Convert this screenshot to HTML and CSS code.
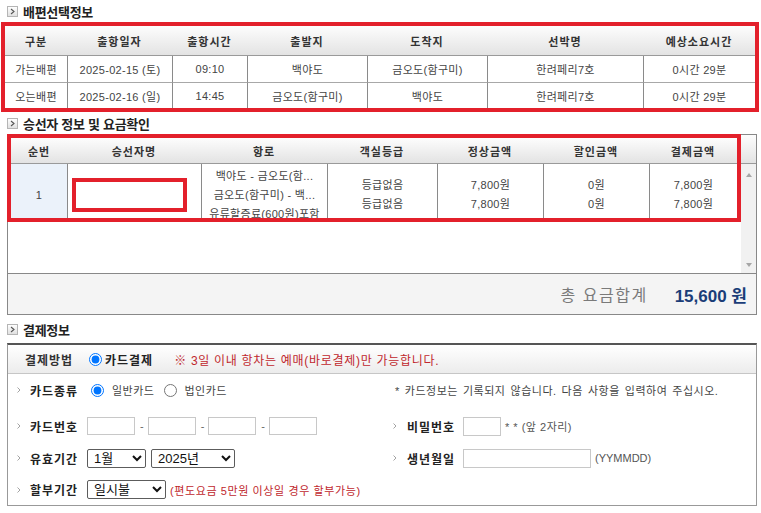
FILE: index.html
```html
<!DOCTYPE html>
<html lang="ko">
<head>
<meta charset="utf-8">
<title>배편 결제</title>
<link rel="stylesheet" href="styles.css">
</head>
<body>
<div class="page">
  <h2 class="sec-title"><span class="sec-ico"><svg width="5" height="7" viewBox="0 0 5 7"><polyline points="1,1 4,3.5 1,6" fill="none" stroke="#555" stroke-width="1.1"/></svg></span>배편선택정보</h2>
  <div class="red-box voyage">
    <table class="tbl voy-tbl">
      <colgroup>
        <col class="v1"><col class="v2"><col class="v3"><col class="v4"><col class="v5"><col class="v6"><col class="v7">
      </colgroup>
      <thead>
        <tr><th>구분</th><th>출항일자</th><th>출항시간</th><th>출발지</th><th>도착지</th><th>선박명</th><th>예상소요시간</th></tr>
      </thead>
      <tbody>
        <tr><td>가는배편</td><td>2025-02-15 (토)</td><td>09:10</td><td>백야도</td><td>금오도(함구미)</td><td>한려페리7호</td><td>0시간 29분</td></tr>
        <tr><td>오는배편</td><td>2025-02-16 (일)</td><td>14:45</td><td>금오도(함구미)</td><td>백야도</td><td>한려페리7호</td><td>0시간 29분</td></tr>
      </tbody>
    </table>
  </div>

  <h2 class="sec-title"><span class="sec-ico"><svg width="5" height="7" viewBox="0 0 5 7"><polyline points="1,1 4,3.5 1,6" fill="none" stroke="#555" stroke-width="1.1"/></svg></span>승선자 정보 및 요금확인</h2>
  <div class="pax-box">
    <div class="pax-scroll">
      <div class="pax-main">
        <div class="red-box pax-red">
          <table class="tbl pax-tbl">
            <colgroup>
              <col class="p1"><col class="p2"><col class="p3"><col class="p4"><col class="p5"><col class="p6"><col class="p7">
            </colgroup>
            <thead>
              <tr><th>순번</th><th>승선자명</th><th>항로</th><th>객실등급</th><th>정상금액</th><th>할인금액</th><th>결제금액</th></tr>
            </thead>
            <tbody>
              <tr>
                <td class="no">1</td>
                <td class="name"><div class="name-box"></div></td>
                <td class="route"><div>백야도 - 금오도(함...</div><div>금오도(함구미) - 백...</div><div>유류할증료(600원)포함</div></td>
                <td>등급없음<br>등급없음</td>
                <td>7,800원<br>7,800원</td>
                <td>0원<br>0원</td>
                <td>7,800원<br>7,800원</td>
              </tr>
            </tbody>
          </table>
        </div>
      </div>
      <div class="pax-side">
        <div class="side-head"></div>
        <div class="scrollbar"><span class="arr up"></span><span class="arr down"></span></div>
      </div>
    </div>
    <div class="total"><span class="total-label">총 요금합계</span><span class="total-value">15,600 원</span></div>
  </div>

  <h2 class="sec-title pay-title"><span class="sec-ico"><svg width="5" height="7" viewBox="0 0 5 7"><polyline points="1,1 4,3.5 1,6" fill="none" stroke="#555" stroke-width="1.1"/></svg></span>결제정보</h2>
  <div class="pay-box">
    <div class="pay-head">
      <span class="head-label">결제방법</span>
      <input type="radio" class="rad head-rad" name="method" checked>
      <span class="head-opt">카드결제</span>
      <span class="note-red head-note">※ 3일 이내 항차는 예매(바로결제)만 가능합니다.</span>
    </div>
    <div class="pay-line">
      <div class="pay-cell left">
        <span class="arrow"><svg width="4" height="6" viewBox="0 0 4 6"><polyline points="0.5,0.5 3,3 0.5,5.5" fill="none" stroke="#999" stroke-width="0.9"/></svg></span>
        <span class="lbl">카드종류</span>
        <input type="radio" class="rad r1" name="ctype" checked><span class="opt o1">일반카드</span>
        <input type="radio" class="rad r2" name="ctype"><span class="opt o2">법인카드</span>
      </div>
      <div class="pay-cell right">
        <span class="info">* 카드정보는 기록되지 않습니다. 다음 사항을 입력하여 주십시오.</span>
      </div>
    </div>
    <div class="pay-line tall">
      <div class="pay-cell left">
        <span class="arrow"><svg width="4" height="6" viewBox="0 0 4 6"><polyline points="0.5,0.5 3,3 0.5,5.5" fill="none" stroke="#999" stroke-width="0.9"/></svg></span>
        <span class="lbl">카드번호</span>
        <input type="text" class="txt card">
        <span class="dash">-</span>
        <input type="text" class="txt card">
        <span class="dash">-</span>
        <input type="text" class="txt card">
        <span class="dash">-</span>
        <input type="text" class="txt card">
      </div>
      <div class="pay-cell right">
        <span class="arrow r"><svg width="4" height="6" viewBox="0 0 4 6"><polyline points="0.5,0.5 3,3 0.5,5.5" fill="none" stroke="#999" stroke-width="0.9"/></svg></span>
        <span class="lbl r">비밀번호</span>
        <input type="password" class="txt pw">
        <span class="hint">* * (앞 2자리)</span>
      </div>
    </div>
    <div class="pay-line">
      <div class="pay-cell left">
        <span class="arrow"><svg width="4" height="6" viewBox="0 0 4 6"><polyline points="0.5,0.5 3,3 0.5,5.5" fill="none" stroke="#999" stroke-width="0.9"/></svg></span>
        <span class="lbl">유효기간</span>
        <select class="sel month"><option>1월</option></select>
        <select class="sel year"><option>2025년</option></select>
      </div>
      <div class="pay-cell right">
        <span class="arrow r"><svg width="4" height="6" viewBox="0 0 4 6"><polyline points="0.5,0.5 3,3 0.5,5.5" fill="none" stroke="#999" stroke-width="0.9"/></svg></span>
        <span class="lbl r">생년월일</span>
        <input type="text" class="txt birth">
        <span class="hint ymd">(YYMMDD)</span>
      </div>
    </div>
    <div class="pay-line last">
      <div class="pay-cell left wide">
        <span class="arrow"><svg width="4" height="6" viewBox="0 0 4 6"><polyline points="0.5,0.5 3,3 0.5,5.5" fill="none" stroke="#999" stroke-width="0.9"/></svg></span>
        <span class="lbl">할부기간</span>
        <select class="sel inst"><option>일시불</option></select>
        <span class="note-red inst-note">(편도요금 5만원 이상일 경우 할부가능)</span>
      </div>
      <div class="pay-cell right"></div>
    </div>
  </div>
</div>
</body>
</html>
```

FILE: styles.css
```css
* { box-sizing: border-box; }
html, body { margin: 0; padding: 0; background: #fff; }
body {
  font-family: "Liberation Sans", "Noto Sans CJK KR", sans-serif;
  font-size: 11px;
  color: #444;
}
.page { width: 761px; }

/* section titles */
.sec-title {
  display: flex;
  align-items: center;
  gap: 5px;
  height: 22px;
  margin: 0;
  padding-left: 7px;
  font-family: "Noto Sans CJK KR", sans-serif;
  font-size: 13px;
  font-weight: 700;
  color: #222;
  letter-spacing: -0.3px;
}
.pay-title { height: 28px; }
.sec-ico {
  width: 11px;
  height: 11px;
  border: 1px solid #b5b5b5;
  background: linear-gradient(#ffffff, #e0e0e0);
  display: flex;
  align-items: center;
  justify-content: center;
}
.sec-ico svg { display: block; }

.red-box { border: 4px solid #e3202b; }

/* tables */
.tbl { border-collapse: separate; border-spacing: 0; table-layout: fixed; }
.tbl th, .tbl td {
  padding: 0;
  text-align: center;
  vertical-align: middle;
  white-space: nowrap;
  overflow: hidden;
}
.tbl th {
  background: linear-gradient(#fdfdfd, #e3e3e3);
  border-bottom: 1px solid #9a9a9a;
  font-family: "Noto Sans CJK KR", sans-serif;
  font-weight: 700;
  font-size: 11px;
  letter-spacing: 1px;
  color: #333;
}
.tbl td { color: #444; letter-spacing: 0.3px; }

.voyage { width: 758px; margin-left: 1px; }
.voy-tbl { width: 750px; }
.voy-tbl th { height: 30px; }
.voy-tbl td { height: 26px; border-left: 1px solid #8a8a8a; }
.voy-tbl td:first-child { border-left: 0; }
.voy-tbl tbody tr + tr td { border-top: 1px solid #a8a8a8; }
.v1 { width: 62px; } .v2 { width: 105px; } .v3 { width: 75px; } .v4 { width: 120px; }
.v5 { width: 120px; } .v6 { width: 156px; } .v7 { width: 112px; }

/* passenger box */
.pax-box { margin-left: 7px; width: 750px; border: 1px solid #888; }
.pax-scroll { display: flex; height: 138px; }
.pax-main { flex: 0 0 733px; }
.pax-red { margin: -1px 0 0 -1px; width: 734px; height: 88px; overflow: hidden; }
.pax-tbl { width: 726px; }
.pax-tbl th { height: 26px; }
.pax-tbl td { height: 62px; line-height: 19px; border-left: 1px solid #8a8a8a; }
.pax-tbl td.no { background: #ebf2fa; border-left: 0; }
.pax-tbl td.name { text-align: left; }
.name-box { width: 115px; height: 34px; margin-left: 4px; border: 4px solid #e3202b; background: #fff; }
.p1 { width: 56px; } .p2 { width: 134px; } .p3 { width: 126px; } .p4 { width: 110px; }
.p5 { width: 106px; } .p6 { width: 106px; } .p7 { width: 88px; }

.pax-side { flex: 1; display: flex; flex-direction: column; }
.side-head { height: 29px; background: linear-gradient(#fdfdfd, #e3e3e3); border-bottom: 1px solid #9a9a9a; }
.scrollbar {
  flex: 1;
  background: #f1f1f1;
  display: flex;
  flex-direction: column;
  align-items: center;
  justify-content: space-between;
  padding: 9px 0 6px;
}
.arr { width: 0; height: 0; border-left: 3.5px solid transparent; border-right: 3.5px solid transparent; }
.arr.up { border-bottom: 4px solid #a6a6a6; }
.arr.down { border-top: 4px solid #a6a6a6; }

.total {
  height: 41px;
  border-top: 1px solid #888;
  background: #f4f4f4;
  display: flex;
  align-items: center;
  justify-content: flex-end;
  gap: 27px;
  padding-right: 9px;
}
.total-label { font-family: "Noto Sans CJK KR", sans-serif; font-size: 16px; color: #7a7a7a; letter-spacing: 1.5px; }
.total-value { font-size: 17px; font-weight: 700; color: #1b3d78; }

/* payment box */
.pay-box { margin-left: 7px; width: 750px; border: 1px solid #999; border-top: 2px solid #555; }
.pay-head {
  height: 29px;
  display: flex;
  align-items: center;
  padding-left: 17px;
  background: linear-gradient(#ffffff, #ececec);
  border-bottom: 1px solid #c6c6c6;
}
.head-label { font-family: "Noto Sans CJK KR", sans-serif; font-size: 12px; font-weight: 700; color: #333; width: 64px; letter-spacing: 1px; }
.rad { margin: 0; width: 13px; height: 13px; flex: none; }
.head-opt { margin-left: 3px; font-family: "Noto Sans CJK KR", sans-serif; font-size: 12px; font-weight: 700; color: #222; letter-spacing: 1px; }
.note-red { color: #c0272d; }
.head-note { margin-left: 21px; font-size: 12px; letter-spacing: 0.7px; }

.pay-line { display: grid; grid-template-columns: 385px 1fr; height: 32px; }
.pay-line.tall { height: 36px; padding-top: 4px; }
.pay-line.last { height: 31px; }
.pay-cell { display: flex; align-items: center; white-space: nowrap; }
.pay-cell.left { padding-left: 9px; }
.arrow { width: 13px; display: flex; align-items: center; }
.arrow.r { width: 14px; }
.arrow svg { display: block; }
.lbl { width: 57px; font-family: "Noto Sans CJK KR", sans-serif; font-size: 12px; font-weight: 700; color: #222; letter-spacing: 1px; }
.lbl.r { width: 56px; }
.r1 { margin-left: 4px; }
.o1 { margin-left: 8px; }
.r2 { margin-left: 10px; }
.o2 { margin-left: 7px; }
.opt { color: #444; letter-spacing: 0.5px; }
.info { padding-left: 2px; color: #444; word-spacing: 1.5px; letter-spacing: 0.5px; }

.txt { height: 18px; border: 1px solid #c8c8c8; padding: 0 2px; background: #fff; font-size: 11px; }
.card { width: 48px; }
.dash { margin: 0 4px 0 5px; color: #666; }
.pw { width: 38px; height: 19px; }
.birth { width: 128px; height: 19px; }
.hint { margin-left: 4px; color: #555; letter-spacing: 0.5px; }
.hint.ymd { letter-spacing: 0; }

.sel {
  height: 19px;
  border: 1px solid #5c5c5c;
  border-radius: 2px;
  background: #fff;
  font-family: "Liberation Sans", "Noto Sans CJK KR", sans-serif;
  font-size: 13px;
  color: #111;
  padding: 0 0 0 2px;
}
.month { width: 59px; }
.year { width: 84px; margin-left: 5px; }
.inst { width: 79px; }
.inst-note { margin-left: 4px; letter-spacing: 0.6px; }
```
